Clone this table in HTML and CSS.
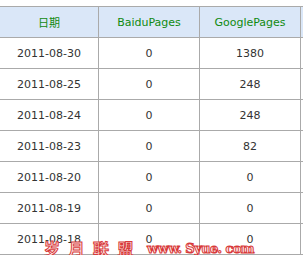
FILE: index.html
```html
<!DOCTYPE html>
<html>
<head>
<meta charset="utf-8">
<link rel="stylesheet" href="styles.css">
</head>
<body>
<div class="page">
<table class="stats">
  <thead>
    <tr><th class="c1">日期</th><th class="c2">BaiduPages</th><th class="c3">GooglePages</th><th class="c4"></th></tr>
  </thead>
  <tbody>
    <tr><td>2011-08-30</td><td>0</td><td>1380</td><td></td></tr>
    <tr><td>2011-08-25</td><td>0</td><td>248</td><td></td></tr>
    <tr><td>2011-08-24</td><td>0</td><td>248</td><td></td></tr>
    <tr><td>2011-08-23</td><td>0</td><td>82</td><td></td></tr>
    <tr><td>2011-08-20</td><td>0</td><td>0</td><td></td></tr>
    <tr><td>2011-08-19</td><td>0</td><td>0</td><td></td></tr>
    <tr><td>2011-08-18</td><td>0</td><td>0</td><td></td></tr>
  </tbody>
</table>
<div class="watermark"><span class="wm-cn">岁月联盟</span><span class="wm-en">www. Syue. com</span></div>
</div>
</body>
</html>
```

FILE: styles.css
```css
html, body {
  margin: 0;
  padding: 0;
  background: #fff;
  overflow: hidden;
}
.page {
  position: relative;
  width: 303px;
  height: 255px;
  overflow: hidden;
}
.stats {
  margin-top: 6px;
  border-collapse: separate;
  border-spacing: 0;
  table-layout: fixed;
  width: 361px;
  font-family: "DejaVu Sans", Verdana, "Noto Sans CJK SC", sans-serif;
  font-size: 11px;
}
.stats th, .stats td {
  box-sizing: border-box;
  padding: 0;
  text-align: center;
  border-right: 1px solid #aaaaaa;
  border-bottom: 1px solid #aaaaaa;
}
.stats th {
  height: 32px;
  border-top: 1px solid #aaaaaa;
  background: #dae7f8;
  color: #108a10;
  font-weight: normal;
}
.stats td {
  height: 31px;
  color: #333;
}
.c1 { width: 99px; }
.c2 { width: 101px; }
.c3 { width: 101px; }
.c4 { width: 60px; }
.watermark {
  position: absolute;
  left: 44px;
  top: 236px;
  display: flex;
  align-items: center;
  white-space: nowrap;
  color: #fff0f0;
  -webkit-text-stroke: 1px #d83a3a;
  font-weight: bold;
}
.wm-cn {
  font-family: "Noto Sans CJK SC", sans-serif;
  font-size: 16px;
  letter-spacing: 8.5px;
  margin-right: 5px;
}
.wm-en {
  font-family: "DejaVu Serif", serif;
  font-size: 13px;
  letter-spacing: -0.6px;
}
```
